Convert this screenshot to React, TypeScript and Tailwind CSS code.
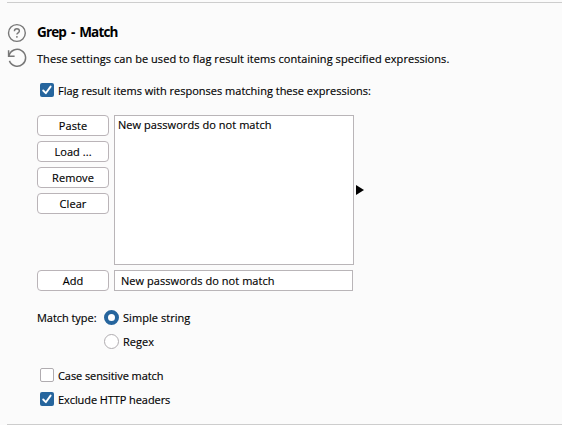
import type { ReactNode } from "react";

function CheckBox({ checked, children }: { checked?: boolean; children: ReactNode }) {
  return (
    <label className="flex h-[14px] items-center gap-1">
      <span
        className={
          checked
            ? "block size-[14px] shrink-0 rounded-[2px] bg-[#26659d]"
            : "block size-[14px] shrink-0 rounded-[2px] border border-[#b0acb0] bg-white"
        }
      >
        {checked && (
          <svg viewBox="0 0 14 14" className="block size-[14px]" fill="none" stroke="#fff" strokeWidth="1.9">
            <path d="M3.2 7.5 5.8 10.2 10.6 3.6" strokeLinecap="round" strokeLinejoin="round" />
          </svg>
        )}
      </span>
      <span className="relative top-px">{children}</span>
    </label>
  );
}

function Radio({ selected, children }: { selected?: boolean; children: ReactNode }) {
  return (
    <label className="flex h-[15px] items-start gap-1">
      <span
        className={
          selected
            ? "block size-[15px] shrink-0 rounded-full border-[4px] border-[#26659d] bg-white"
            : "block size-[15px] shrink-0 rounded-full border border-[#b0acb0] bg-white"
        }
      />
      <span className="pt-px">{children}</span>
    </label>
  );
}

function Button({ children }: { children: ReactNode }) {
  return (
    <button className="flex h-[21px] w-[72px] items-center justify-center rounded-[4px] border border-[#bab4b8] bg-white pt-px">
      {children}
    </button>
  );
}

export default function App() {
  return (
    <div className="h-[425px] w-[562px] overflow-hidden bg-[#fbfbfb] pt-[2px] pl-[7px] font-['Open_Sans','Noto_Sans',sans-serif] text-[11px] leading-[14px] tracking-[0.055px] whitespace-nowrap text-black [-webkit-text-stroke:0.15px_black]">
      <div className="flex h-[423px] flex-col border-y border-[#cdcdcd]">
        <div className="flex h-[80px] pt-[20px]">
          <div className="flex w-[30px] flex-col gap-[5px]">
            <svg viewBox="0 0 20 20" className="size-5" fill="none" stroke="#777" strokeWidth="1.4">
              <circle cx="9.9" cy="10" r="8.4" />
              <path d="M7.4 8.2C7.4 6.6 8.5 5.8 9.9 5.8S12.4 6.7 12.4 8.1C12.4 9.9 9.9 9.8 9.9 11.5" />
              <path d="M9.9 13.1V14.8" />
            </svg>
            <svg viewBox="0 0 20 20" className="size-5" fill="none" stroke="#777" strokeWidth="1.5">
              <path d="M1.6 2.3V8.3H7.6" />
              <path d="M2 7.9A8.4 8.4 0 1 1 2.4 12.9" />
            </svg>
          </div>
          <div>
            <h1 className="h-[29px] text-[13.5px] leading-[19px] font-bold tracking-[-0.85px] [word-spacing:2.2px] [-webkit-text-stroke:0]">Grep - Match</h1>
            <p>These settings can be used to flag result items containing specified expressions.</p>
          </div>
        </div>
        <div className="pl-[33px] tracking-[0]">
          <CheckBox checked>Flag result items with responses matching these expressions:</CheckBox>
        </div>
        <div className="mt-[18px] flex gap-[5px] pl-[30px]">
          <div className="flex flex-col gap-[5px]">
            <Button>Paste</Button>
            <Button>Load ...</Button>
            <Button>Remove</Button>
            <Button>Clear</Button>
          </div>
          <div className="h-[150px] w-[240px] border border-[#b9b5b8] bg-white pt-[2px] pl-[3px]">New passwords do not match</div>
          <svg viewBox="0 0 8 10" className="-ml-[3px] mt-[70px] h-[10px] w-2">
            <path d="M0 0 8 5 0 10Z" fill="#000" />
          </svg>
        </div>
        <div className="mt-[5px] flex gap-[5px] pl-[30px]">
          <Button>Add</Button>
          <div className="flex h-[21px] w-[239px] items-center border border-[#b9b5b8] bg-white pt-px pl-[6px]">
            New passwords do not match
          </div>
        </div>
        <div className="mt-[19px] flex pl-[30px]">
          <span className="w-[67px] pt-px tracking-[-0.05px]">Match type:</span>
          <div className="flex flex-col gap-[9px]">
            <Radio selected>Simple string</Radio>
            <Radio>Regex</Radio>
          </div>
        </div>
        <div className="mt-[19px] flex flex-col gap-[10px] pl-[33px] tracking-[-0.08px]">
          <CheckBox>Case sensitive match</CheckBox>
          <CheckBox checked>Exclude HTTP headers</CheckBox>
        </div>
      </div>
    </div>
  );
}
